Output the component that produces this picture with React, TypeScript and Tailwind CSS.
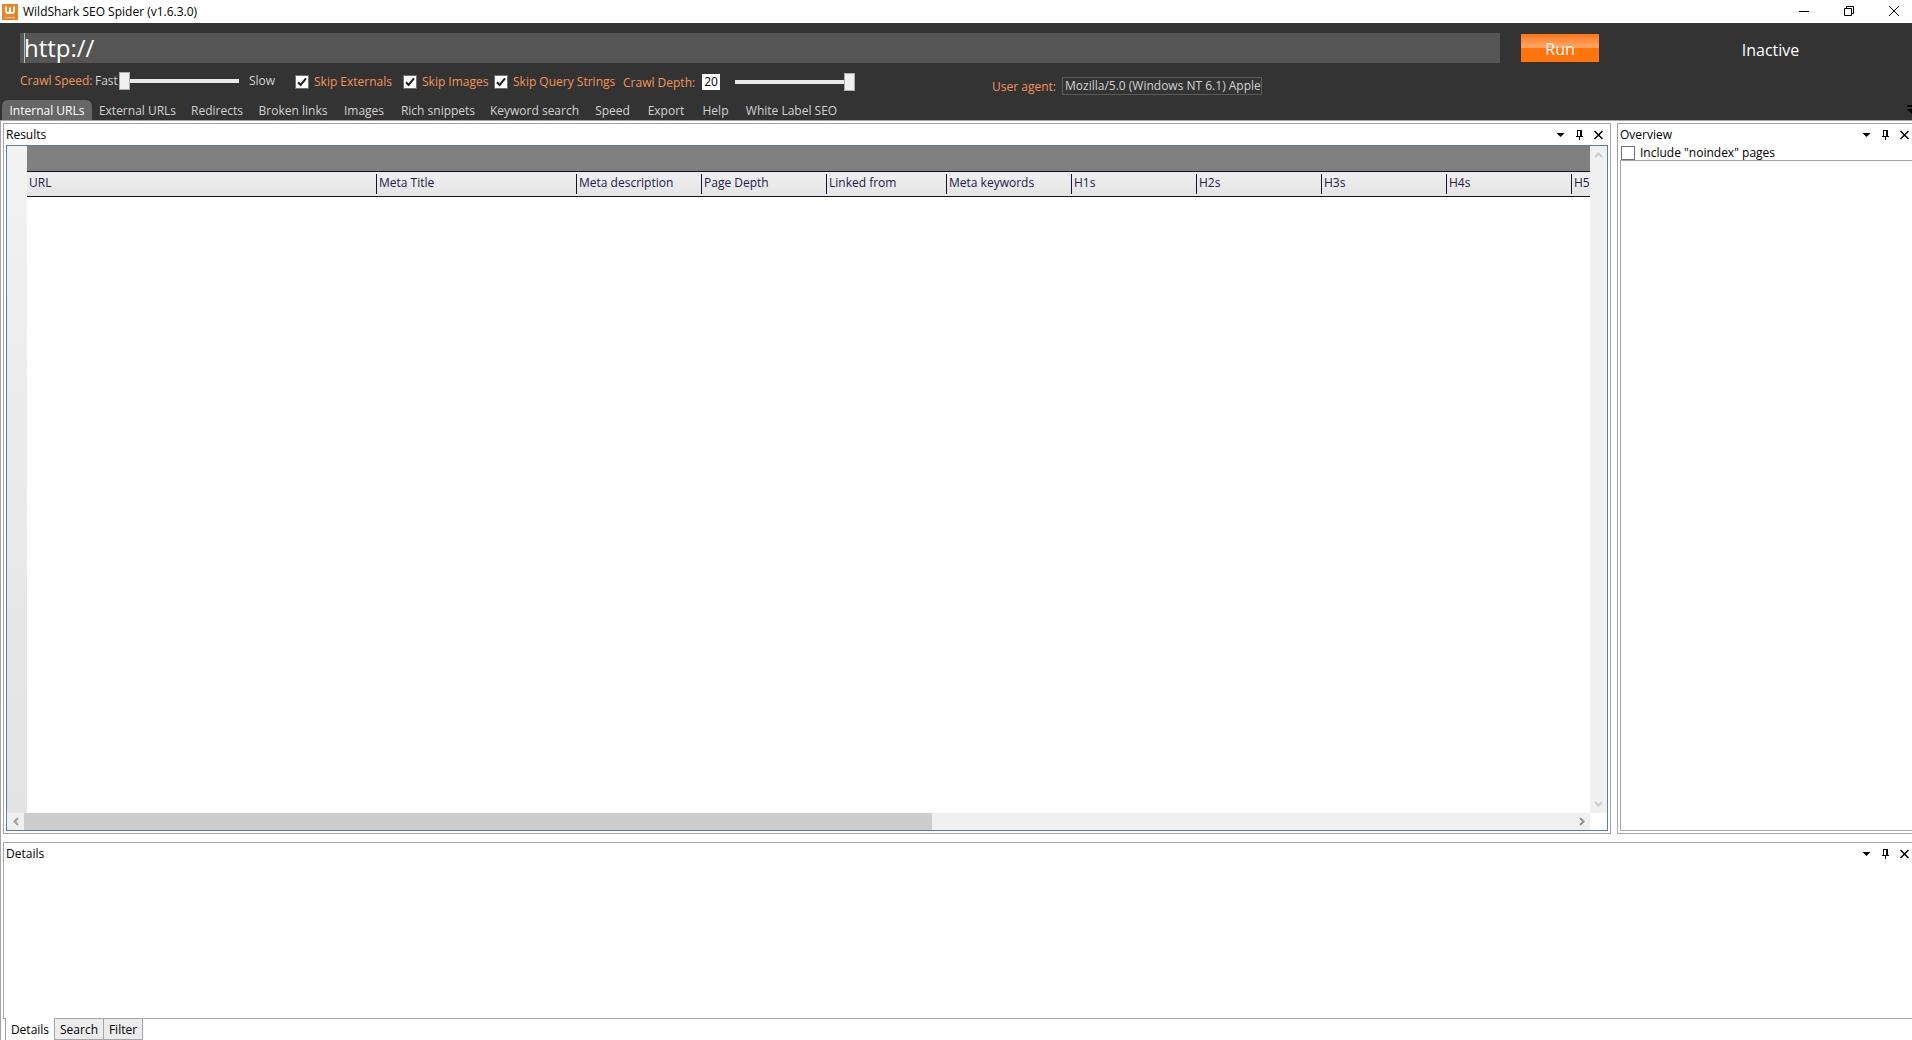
import { useState } from 'react'
import { clsx } from 'clsx'

const TABS = [
  { name: 'Internal URLs', width: 'w-[90px]' },
  { name: 'External URLs', width: 'w-[91px]' },
  { name: 'Redirects', width: 'w-[68px]' },
  { name: 'Broken links', width: 'w-[84px]' },
  { name: 'Images', width: 'w-[58px]' },
  { name: 'Rich snippets', width: 'w-[90px]' },
  { name: 'Keyword search', width: 'w-[103px]' },
  { name: 'Speed', width: 'w-[53px]' },
  { name: 'Export', width: 'w-[54px]' },
  { name: 'Help', width: 'w-[45px]' },
  { name: 'White Label SEO', width: 'w-[107px]' },
]

const COLUMNS = [
  { name: 'URL', width: 'w-[349px]' },
  { name: 'Meta Title', width: 'w-[200px]' },
  { name: 'Meta description', width: 'w-[125px]' },
  { name: 'Page Depth', width: 'w-[125px]' },
  { name: 'Linked from', width: 'w-[120px]' },
  { name: 'Meta keywords', width: 'w-[125px]' },
  { name: 'H1s', width: 'w-[125px]' },
  { name: 'H2s', width: 'w-[125px]' },
  { name: 'H3s', width: 'w-[125px]' },
  { name: 'H4s', width: 'w-[125px]' },
  { name: 'H5s', width: 'w-[125px]' },
]

const SLIDER =
  'h-5 w-[120px] appearance-none bg-transparent [&::-webkit-slider-runnable-track]:h-1 [&::-webkit-slider-runnable-track]:bg-[#e7eaea] [&::-webkit-slider-thumb]:-mt-[7px] [&::-webkit-slider-thumb]:h-[18px] [&::-webkit-slider-thumb]:w-[11px] [&::-webkit-slider-thumb]:appearance-none [&::-webkit-slider-thumb]:border [&::-webkit-slider-thumb]:border-[#acacac] [&::-webkit-slider-thumb]:bg-[#f0f0f0]'

function Check({ label, checked = false, dark = false }: { label: string; checked?: boolean; dark?: boolean }) {
  return (
    <label className={clsx('flex items-center gap-[5px] whitespace-nowrap', dark && 'text-[#f5935a]')}>
      <span className="grid">
        <input
          type="checkbox"
          defaultChecked={checked}
          className="peer col-start-1 row-start-1 size-[14px] appearance-none border border-[#707070] bg-white"
        />
        <svg
          viewBox="0 0 14 14"
          className="pointer-events-none invisible col-start-1 row-start-1 size-[14px] peer-checked:visible"
          fill="none"
          stroke="#212121"
          strokeWidth="2"
        >
          <path d="M3 7.2 5.6 10 11 3.4" />
        </svg>
      </span>
      {label}
    </label>
  )
}

function PaneHeader({ title, className }: { title: string; className?: string }) {
  return (
    <div className={clsx('flex h-[21px] shrink-0 items-center justify-between', className)}>
      <h2>{title}</h2>
      <div className="flex items-center gap-[10px]">
        <button aria-label="Window position">
          <svg width="9" height="10" viewBox="0 0 9 10">
            <path d="M0.5 3h8L4.5 7z" />
          </svg>
        </button>
        <button aria-label="Auto hide">
          <svg width="9" height="10" viewBox="0 0 9 10" fill="none" stroke="black" shapeRendering="crispEdges">
            <path d="M2.5 6V.5h4V6M5.5 1v5M1 6.5h7M4.5 7v3" />
          </svg>
        </button>
        <button aria-label="Close">
          <svg width="9" height="10" viewBox="0 0 9 10" fill="none" stroke="black" strokeWidth="1.5">
            <path d="M.5 1l8 8M8.5 1l-8 8" />
          </svg>
        </button>
      </div>
    </div>
  )
}

function TitleBar() {
  return (
    <header className="flex h-[23px] shrink-0 items-center pl-[2px] pr-3">
      <svg width="16" height="16" viewBox="0 0 16 16">
        <rect width="16" height="16" fill="#e8862a" />
        <path
          d="M4 2.500V6.500Q4 9.200 6 9.200Q8 9.200 8 6.500V3.500V6.500Q8 9.200 10 9.200Q12 9.200 12 6.500V2.500"
          fill="none"
          stroke="white"
          strokeWidth="1.8"
        />
        <path d="M3 13.5h10" stroke="#f6c795" strokeWidth="1" />
      </svg>
      <h1 className="ml-[5px] grow">WildShark SEO Spider (v1.6.3.0)</h1>
      <div className="flex items-center gap-[35px] pr-px pb-[2px]">
        <button aria-label="Minimize">
          <svg width="10" height="10" fill="none" stroke="black">
            <path d="M0 5.5h10" />
          </svg>
        </button>
        <button aria-label="Restore">
          <svg width="10" height="10" fill="none" stroke="black">
            <path d="M.5 2.5h7v7h-7zM2.5 2V.5h7v7H8" />
          </svg>
        </button>
        <button aria-label="Close window">
          <svg width="10" height="10" fill="none" stroke="black">
            <path d="M0 0l10 10M10 0 0 10" />
          </svg>
        </button>
      </div>
    </header>
  )
}

function CrawlBar() {
  return (
    <div className="flex pt-[10px] pl-5">
      <div className="grow">
        <input
          aria-label="Website address"
          defaultValue="http://"
          className="block h-[30px] w-full border-l-4 border-[#555] bg-[#555] text-2xl text-white shadow-[inset_1px_0_0_#bbb] outline-none"
        />
        <div className="flex h-[37px] items-center">
          <div className="flex items-center pb-[2px]">
            <label htmlFor="speed" className="w-[75px] whitespace-nowrap text-[#f5935a]">
              Crawl Speed:
            </label>
            <span className="w-6">Fast</span>
            <input id="speed" type="range" defaultValue={0} className={SLIDER} />
            <span className="ml-[10px] w-[46px]">Slow</span>
          </div>
          <div className="w-[108px]">
            <Check label="Skip Externals" checked dark />
          </div>
          <div className="w-[91px]">
            <Check label="Skip Images" checked dark />
          </div>
          <div className="w-[129px]">
            <Check label="Skip Query Strings" checked dark />
          </div>
          <label htmlFor="depth" className="w-[79px] shrink-0 pt-[2px] whitespace-nowrap text-[#f5935a]">
            Crawl Depth:
          </label>
          <input
            id="depth"
            defaultValue="20"
            className="h-4 w-[18px] bg-white text-center text-xs text-black outline-none"
          />
          <input aria-label="Crawl depth slider" type="range" defaultValue={100} className={clsx(SLIDER, 'ml-[15px]')} />
          <label htmlFor="agent" className="mt-[10px] ml-[137px] w-[70px] text-[#f5935a]">
            User agent:
          </label>
          <input
            id="agent"
            defaultValue="Mozilla/5.0 (Windows NT 6.1) AppleWebKit/537.36"
            className="mt-[8px] h-[18px] w-[200px] border border-[#5c5c5c] bg-transparent pl-[2px] outline-none"
          />
        </div>
      </div>
      <button className="mt-px ml-[21px] h-7 w-[78px] shrink-0 bg-linear-to-b from-[#ff750d] from-0% via-[#ffa868] via-50% to-[#ff740c] to-50% pt-[2px] text-base leading-6 text-white">
        Run
      </button>
      <output className="mt-[5px] w-[313px] shrink-0 pl-[30px] text-center text-base text-white">Inactive</output>
    </div>
  )
}

function ResultsPane() {
  return (
    <section className="flex min-w-0 grow flex-col border border-[#a5a5a5] px-[2px] pb-[2px]">
      <PaneHeader title="Results" className="pr-[5px]" />
      <div className="grid min-h-0 grow grid-cols-[minmax(0,1fr)_17px] grid-rows-[minmax(0,1fr)_17px] border border-[#5a7ea6]">
        <div className="flex min-w-0 overflow-hidden">
          <div className="w-5 shrink-0 bg-linear-to-b from-[#f2f2f2] to-[#e3e3e3]" />
          <div className="min-w-0 grow overflow-hidden">
            <div className="h-[25px] bg-[#808080]" />
            <table className="w-[1669px] table-fixed border-collapse text-[#20204a]">
              <thead>
                <tr className="h-[25px] border-y border-[#14142e] bg-linear-to-b from-[#f0f0f0] to-[#e4e4e4]">
                  {COLUMNS.map((column, i) => (
                    <th key={column.name} className={clsx('p-0 text-left font-normal', column.width)}>
                      <div className={clsx('h-5 pl-[2px] leading-[18px]', i > 0 && 'border-l border-[#14142e]')}>
                        {column.name}
                      </div>
                    </th>
                  ))}
                </tr>
              </thead>
            </table>
          </div>
        </div>
        <div className="flex flex-col items-center justify-between bg-[#f0f0f0] py-[6px]">
          <svg width="9" height="6" fill="none" stroke="#cdcdcd" strokeWidth="2">
            <path d="M1 5l3.500-3.500L8 5" />
          </svg>
          <svg width="9" height="6" fill="none" stroke="#cdcdcd" strokeWidth="2">
            <path d="M1 1l3.500 3.500L8 1" />
          </svg>
        </div>
        <div className="flex bg-[#f0f0f0]">
          <button aria-label="Scroll left" className="flex w-[17px] items-center justify-center">
            <svg width="6" height="9" fill="none" stroke="#a0a0a0" strokeWidth="2">
              <path d="M5 1 1.500 4.500 5 8" />
            </svg>
          </button>
          <div className="grow">
            <div className="h-full w-[58.6%] bg-[#cdcdcd]" />
          </div>
          <button aria-label="Scroll right" className="flex w-[17px] items-center justify-center">
            <svg width="6" height="9" fill="none" stroke="#909090" strokeWidth="2">
              <path d="M1 1l3.500 3.500L1 8" />
            </svg>
          </button>
        </div>
      </div>
    </section>
  )
}

export default function App() {
  const [tab, setTab] = useState('Internal URLs')

  return (
    <div className="flex h-screen flex-col overflow-hidden bg-white font-['Open_Sans','Noto_Sans',sans-serif] text-xs text-black">
      <TitleBar />
      <div className="shrink-0 bg-[#333] text-[#d2d2d2]">
        <CrawlBar />
        <nav className="flex h-5 items-stretch pl-[2px]">
          {TABS.map(({ name, width }) => (
            <button
              key={name}
              onClick={() => setTab(name)}
              className={clsx(
                'flex items-center justify-center rounded-t-md pt-[2px] whitespace-nowrap',
                width,
                tab === name && 'bg-[#666] text-white'
              )}
            >
              {name}
            </button>
          ))}
          <svg className="ml-auto mt-1" width="5" height="12" viewBox="0 0 5 12">
            <path d="M0 1h5v2H0zM0 5h5v5z" />
          </svg>
        </nav>
      </div>

      <main className="flex min-h-0 grow flex-col border-t border-l border-[#a5a5a5] pt-[2px] pl-[2px]">
        <div className="flex min-h-0 grow gap-[6px]">
          <ResultsPane />
          <section className="flex w-[295px] shrink-0 flex-col border border-r-0 border-[#a5a5a5] pb-[2px] pl-[2px]">
            <PaneHeader title="Overview" className="pr-[3px]" />
            <div className="flex h-[15px] items-center pl-px">
              <Check label={'Include "noindex" pages'} />
            </div>
            <div className="grow border border-r-0 border-[#a5a5a5]" />
          </section>
        </div>
        <section className="mt-2 flex h-[177px] shrink-0 flex-col border border-r-0 border-[#a5a5a5] pl-[2px]">
          <PaneHeader title="Details" className="pr-[3px]" />
        </section>
        <div className="flex h-[21px] shrink-0 pl-[2px]">
          <button className="-mt-px w-[49px] border-l border-[#a5a5a5] bg-white pt-[2px]">Details</button>
          <button className="w-[50px] border border-t-0 border-[#a5a5a5] bg-[#ececec] pt-[2px]">Search</button>
          <button className="w-[39px] border border-t-0 border-l-0 border-[#a5a5a5] bg-[#ececec] pt-[2px]">Filter</button>
        </div>
      </main>
    </div>
  )
}
